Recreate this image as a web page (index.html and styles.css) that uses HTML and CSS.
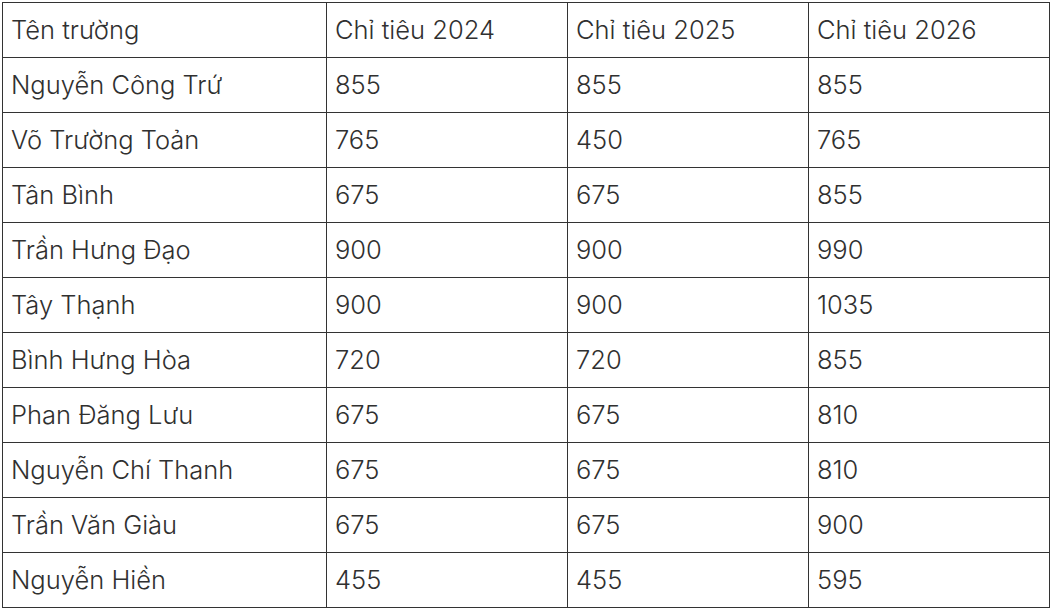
FILE: index.html
```html
<!DOCTYPE html>
<html lang="vi">
<head>
<meta charset="utf-8">
<link rel="stylesheet" href="styles.css">
</head>
<body>
<table class="quota">
  <colgroup>
    <col class="c-name"><col class="c-num"><col class="c-num"><col class="c-num">
  </colgroup>
  <tr><td>Tên trường</td><td>Chỉ tiêu 2024</td><td>Chỉ tiêu 2025</td><td>Chỉ tiêu 2026</td></tr>
  <tr><td>Nguyễn Công Trứ</td><td>855</td><td>855</td><td>855</td></tr>
  <tr><td>Võ Trường Toản</td><td>765</td><td>450</td><td>765</td></tr>
  <tr><td>Tân Bình</td><td>675</td><td>675</td><td>855</td></tr>
  <tr><td>Trần Hưng Đạo</td><td>900</td><td>900</td><td>990</td></tr>
  <tr><td>Tây Thạnh</td><td>900</td><td>900</td><td>1035</td></tr>
  <tr><td>Bình Hưng Hòa</td><td>720</td><td>720</td><td>855</td></tr>
  <tr><td>Phan Đăng Lưu</td><td>675</td><td>675</td><td>810</td></tr>
  <tr><td>Nguyễn Chí Thanh</td><td>675</td><td>675</td><td>810</td></tr>
  <tr><td>Trần Văn Giàu</td><td>675</td><td>675</td><td>900</td></tr>
  <tr><td>Nguyễn Hiền</td><td>455</td><td>455</td><td>595</td></tr>
</table>
</body>
</html>
```
FILE: styles.css
```css
html, body {
  background: #ffffff;
}
body {
  margin: 2px;
  font-family: Inter, "Noto Sans", sans-serif;
  color: #303030;
}
.quota {
  border-collapse: collapse;
  table-layout: fixed;
  width: 1047px;
}
.c-name { width: 324px; }
.c-num { width: 241px; }
.quota td {
  border: 1px solid #333333;
  height: 55px;
  box-sizing: border-box;
  padding: 0 8px;
  font-size: 25.5px;
  font-weight: 300;
  line-height: 30px;
  vertical-align: middle;
  white-space: nowrap;
}
```
